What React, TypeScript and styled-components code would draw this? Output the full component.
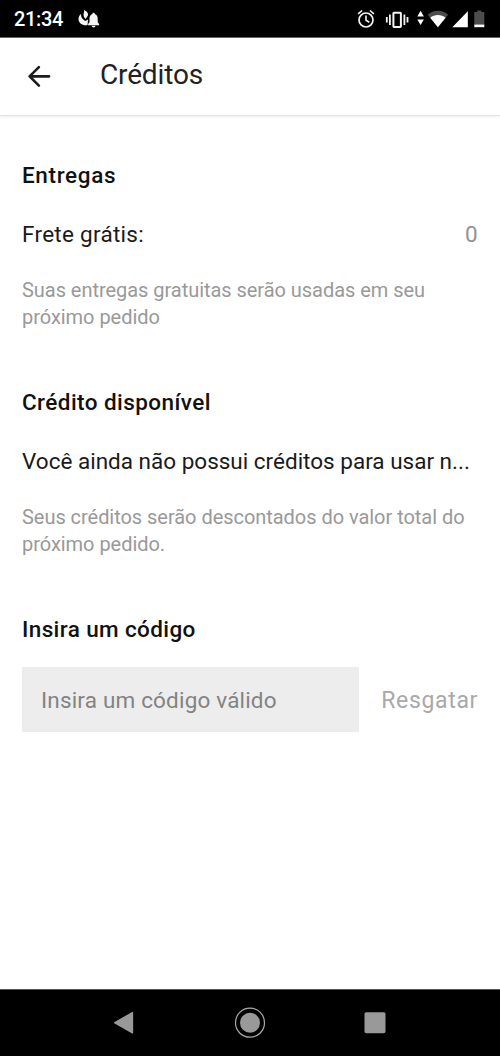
import React from "react";
import styled, { createGlobalStyle } from "styled-components";

const GlobalStyle = createGlobalStyle`
  * { box-sizing: border-box; }
  body { margin: 0; background: #fff; font-family: Roboto, "Liberation Sans", sans-serif; }
`;

const Screen = styled.div`
  display: flex;
  flex-direction: column;
  width: 100%;
  height: 100vh;
  background: #fff;
`;

const StatusBar = styled.header`
  display: flex;
  flex: none;
  align-items: center;
  justify-content: space-between;
  height: 38px;
  padding: 0 13px 0 14px;
  background: #000;
  border-bottom: 1px solid #666;
  color: #fff;
`;

const StatusLeft = styled.div`
  display: flex;
  align-items: center;
  gap: 14px;
`;

const Clock = styled.time`
  font-size: 20px;
  font-weight: 500;
  line-height: 36px;
  letter-spacing: -0.35px;
  padding-top: 1px;
`;

const AppBar = styled.div`
  display: flex;
  flex: none;
  align-items: center;
  height: 78px;
  padding: 0 27px;
  gap: 49px;
  border-bottom: 1px solid #e2e2e2;
  box-shadow: 0 1px 3px rgba(0, 0, 0, 0.08);
`;

const BackButton = styled.button`
  display: flex;
  width: 24px;
  margin-bottom: 2px;
  padding: 0;
  border: 0;
  background: none;
  color: #1c1c1c;
`;

const Title = styled.h1`
  margin: 0 0 3px;
  font-size: 28px;
  font-weight: 400;
  line-height: 36px;
  letter-spacing: -0.15px;
  color: #222;
`;

const Content = styled.main`
  display: flex;
  flex: 1;
  flex-direction: column;
  gap: 57px;
  padding: 45px 22px 0;
`;

const Section = styled.section`
  display: flex;
  flex-direction: column;
`;

const Heading = styled.h2<{ $tracking?: number }>`
  margin: 0;
  font-size: 22.5px;
  font-weight: 500;
  line-height: 28px;
  letter-spacing: ${({ $tracking = 0.43 }) => $tracking}px;
  color: #111;
`;

const Row = styled.div<{ $tracking?: number }>`
  display: flex;
  justify-content: space-between;
  margin-top: 31px;
  font-size: 22.5px;
  line-height: 28px;
  letter-spacing: ${({ $tracking = 0 }) => $tracking}px;
  color: #1a1a1a;
`;

const Label = styled.span`
  white-space: nowrap;
`;

const Count = styled.span`
  color: #929292;
`;

const Hint = styled.p`
  margin: 29px 0 0;
  font-size: 20px;
  line-height: 27px;
  letter-spacing: -0.04px;
  white-space: nowrap;
  color: #999;
`;

const CodeForm = styled.form`
  display: flex;
  align-items: center;
  justify-content: space-between;
  margin-top: 24px;
`;

const CodeInput = styled.input`
  width: 337px;
  height: 65px;
  padding: 0 19px;
  border: 0;
  border-radius: 0;
  outline: 0;
  background: #ededed;
  font-family: inherit;
  font-size: 22.5px;
  letter-spacing: 0.18px;
  &::placeholder { color: #838383; opacity: 1; }
`;

const RedeemButton = styled.button`
  padding: 2px 0 0;
  border: 0;
  background: none;
  font-family: inherit;
  font-size: 23px;
  line-height: 28px;
  letter-spacing: 0.65px;
  color: #a9a9a9;
`;

const NavBar = styled.nav`
  display: flex;
  flex: none;
  align-items: center;
  justify-content: space-between;
  height: 67px;
  padding: 0 109px;
  border-top: 1px solid #555;
  background: #000;
`;

const NavButton = styled.button`
  display: flex;
  padding: 0;
  border: 0;
  background: none;
`;

const NotificationIcon = () => (
  <svg width="24" height="22" viewBox="0 0 24 22" fill="#f4f4f4">
    <path d="M7 2C10.4 3.6 12.2 6 10.3 8.6L8.6 11C7.4 9.6 6.4 8.2 6.6 6.4 6.7 5 7.4 3.8 7 2Z" />
    <path d="M4 6C3.8 9.2 5.2 11.2 8.3 13L11 11.4 10.6 17.1C6 18 1.8 15.4 1.5 11.5 1.4 9 2.4 7.2 4 6Z" />
    <path d="M16.6 4.8c.8 0 1.2.5 1.2 1.2 2 .6 2.9 2.4 2.9 4.6v3.6l1.4 1.8v1.2H11.1V16l1.4-1.8v-3.6c0-2.2.9-4 2.9-4.6 0-.7.4-1.2 1.2-1.2Z" />
    <path d="M14.8 17.8h3.6c0 1-.7 1.6-1.8 1.6s-1.8-.6-1.8-1.6Z" />
  </svg>
);

const StatusIcons = () => (
  <svg width="131" height="24" viewBox="0 0 131 24" fill="none" stroke="#f4f4f4">
    <circle cx="10" cy="13" r="7" strokeWidth="1.7" />
    <path d="M10 8.5v4.7l3.3 2M2.1 6.8l4-3.3M17.9 6.8l-4-3.3" strokeWidth="1.6" />
    <rect x="37.4" y="5.7" width="7.5" height="14.2" rx=".6" strokeWidth="2" />
    <path d="M33.9 7.6V18M30.8 10v5.6M48.4 7.6V18M51.5 10v5.6" strokeWidth="1.8" />
    <g stroke="none" fill="#fff">
      <path d="m64.6 3.7 3.3 5.8h-6.6ZM64.6 18l3.3-5.6h-6.6Z" />
      <path fill="#4d4d4d" d="M71.7 7.7c5.7-5.2 14.7-5.2 20.4 0L81.9 20Z" />
      <path d="M74.2 10.7c4.3-3.7 11.1-3.7 15.4 0l-7.7 9.6Z" />
      <path d="M111.8 4.2v16H96.3Z" />
      <path fill="#4d4d4d" d="M121.3 3.4h4v1.7h3v13.1h-10V5.1h3Z" />
      <path d="M118.3 17.6h10v2.6h-10Z" />
    </g>
  </svg>
);

const BackArrow = () => (
  <svg width="24" height="24" viewBox="0 0 24 24" fill="none" stroke="currentColor" strokeWidth="2.6" strokeLinecap="round" strokeLinejoin="round">
    <path d="M22 12.4H2.8M11.9 3.1l-9.3 9.3 9.3 9.3" />
  </svg>
);

const Triangle = () => (
  <svg width="32" height="32" viewBox="0 0 32 32">
    <path d="M5.5 15.7 23.5 5.5v20.4Z" fill="#999" stroke="#999" strokeWidth="1.3" strokeLinejoin="round" />
  </svg>
);

const Home = () => (
  <svg width="32" height="32" viewBox="0 0 32 32">
    <circle cx="16" cy="15.7" r="14.5" fill="none" stroke="#aaa" strokeWidth="1.2" />
    <circle cx="16" cy="15.7" r="10" fill="#999" />
  </svg>
);

const Square = () => (
  <svg width="32" height="32" viewBox="0 0 32 32">
    <rect x="5.5" y="5.2" width="21" height="21" rx="1.7" fill="#999" />
  </svg>
);

export default function App() {
  return (
    <Screen>
      <GlobalStyle />
      <StatusBar>
        <StatusLeft>
          <Clock>21:34</Clock>
          <NotificationIcon />
        </StatusLeft>
        <StatusIcons />
      </StatusBar>
      <AppBar>
        <BackButton type="button" aria-label="Voltar"><BackArrow /></BackButton>
        <Title>Créditos</Title>
      </AppBar>
      <Content>
        <Section>
          <Heading $tracking={0.65}>Entregas</Heading>
          <Row $tracking={0.28}><Label>Frete grátis:</Label><Count>0</Count></Row>
          <Hint>Suas entregas gratuitas serão usadas em seu<br />próximo pedido</Hint>
        </Section>
        <Section>
          <Heading>Crédito disponível</Heading>
          <Row><Label>Você ainda não possui créditos para usar n...</Label></Row>
          <Hint>Seus créditos serão descontados do valor total do<br />próximo pedido.</Hint>
        </Section>
        <Section>
          <Heading $tracking={0.38}>Insira um código</Heading>
          <CodeForm>
            <CodeInput placeholder="Insira um código válido" />
            <RedeemButton type="button">Resgatar</RedeemButton>
          </CodeForm>
        </Section>
      </Content>
      <NavBar>
        <NavButton type="button" aria-label="Voltar"><Triangle /></NavButton>
        <NavButton type="button" aria-label="Início"><Home /></NavButton>
        <NavButton type="button" aria-label="Recentes"><Square /></NavButton>
      </NavBar>
    </Screen>
  );
}
